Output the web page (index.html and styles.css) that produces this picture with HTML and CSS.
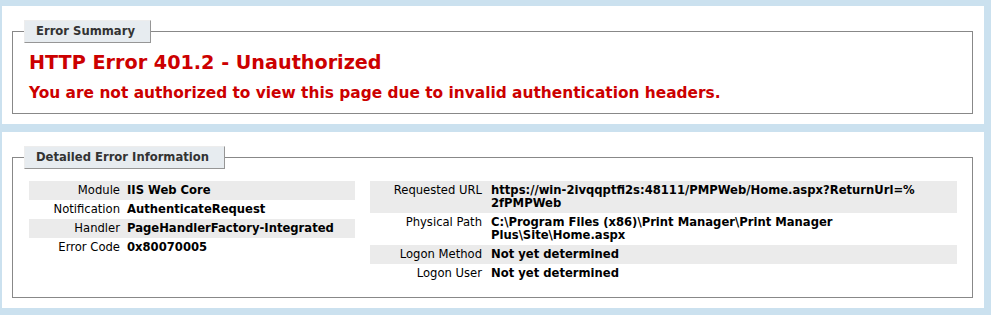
FILE: index.html
```html
<!DOCTYPE html>
<html lang="en">
<head>
    <meta charset="UTF-8">
    <title>IIS 8.5 Detailed Error - 401.2 - Unauthorized</title>
    <link rel="stylesheet" href="styles.css">
</head>
<body>
<div id="content">
    <div class="summary-container">
        <fieldset>
            <legend>Error Summary</legend>
            <h2>HTTP Error 401.2 - Unauthorized</h2>
            <h3>You are not authorized to view this page due to invalid authentication headers.</h3>
        </fieldset>
    </div>

    <div class="content-container">
        <fieldset>
            <legend>Detailed Error Information</legend>
            <div class="details">
                <div class="details-table details-left">
                    <div class="row alt"><span class="label">Module</span><span class="value">IIS Web Core</span></div>
                    <div class="row"><span class="label">Notification</span><span class="value">AuthenticateRequest</span></div>
                    <div class="row alt"><span class="label">Handler</span><span class="value">PageHandlerFactory-Integrated</span></div>
                    <div class="row"><span class="label">Error Code</span><span class="value">0x80070005</span></div>
                </div>
                <div class="details-table details-right">
                    <div class="row alt"><span class="label">Requested URL</span><span class="value">https://win-2ivqqptfi2s:48111/PMPWeb/Home.aspx?ReturnUrl=%<wbr>2fPMPWeb</span></div>
                    <div class="row"><span class="label">Physical Path</span><span class="value">C:\Program Files (x86)\Print Manager\Print Manager Plus\Site\Home.aspx</span></div>
                    <div class="row alt"><span class="label">Logon Method</span><span class="value">Not yet determined</span></div>
                    <div class="row"><span class="label">Logon User</span><span class="value">Not yet determined</span></div>
                </div>
            </div>
        </fieldset>
    </div>
</div>
</body>
</html>
```

FILE: styles.css
```css
body {
    margin: 0;
    font-size: 11.6px;
    line-height: 13px;
    font-family: "DejaVu Sans", Verdana, sans-serif;
    background: #CBE1EF;
}

#content {
    padding: 6px 7px 0 2px;
}

.summary-container,
.content-container {
    background: #FFF;
    padding: 10px;
}

.content-container {
    margin-top: 8px;
}

fieldset {
    margin: 4px 1px 0 0;
    padding: 0 15px 10px 15px;
    border: 1px solid #888;
}

.summary-container fieldset {
    padding-bottom: 10px;
}

legend {
    color: #333333;
    padding: 4px 15px 4px 11px;
    margin: 0 0 0 -4px;
    border-top: 1px solid #EDEDED;
    border-left: 1px solid #EDEDED;
    border-right: 1px solid #969696;
    border-bottom: 1px solid #969696;
    background: #E7ECF0;
    font-weight: bold;
    font-size: 1em;
}

h2 {
    font-size: 19.2px;
    line-height: 23px;
    margin: 8px 0 0 1px;
    color: #CC0000;
}

h3 {
    font-size: 15.4px;
    line-height: 19px;
    margin: 10px 0 0 1px;
    color: #CC0000;
}

.details {
    display: flex;
    gap: 15px;
    margin: 12px 0 4px 0;
}

.details-left {
    width: 326px;
    margin-left: 1px;
}

.details-right {
    flex: 1;
}

.row {
    display: flex;
    padding: 3px 0;
}

.row.alt {
    background: #EBEBEB;
}

.label {
    text-align: right;
    flex: none;
}

.details-left .label {
    width: 91px;
    margin-right: 7px;
}

.details-right .label {
    width: 112px;
    margin-right: 9px;
}

.value {
    font-weight: bold;
    min-width: 0;
}

.details-right .value {
    max-width: 440px;
}
```
